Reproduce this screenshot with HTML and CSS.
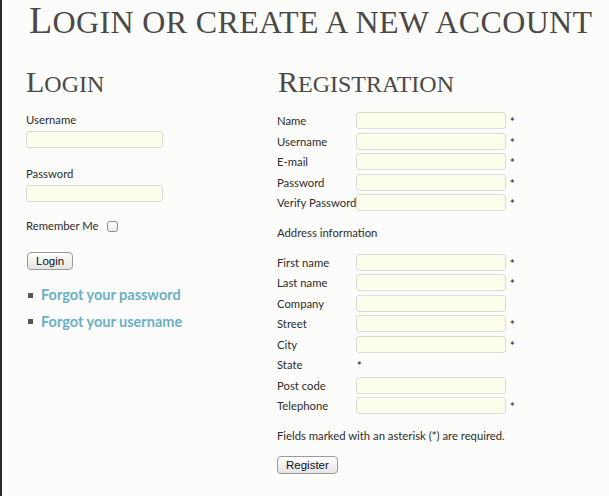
FILE: index.html
```html
<!DOCTYPE html>
<html lang="en">
<head>
  <meta charset="UTF-8">
  <meta name="viewport" content="width=device-width, initial-scale=1.0">
  <title>Login or create a new account</title>
  <link rel="stylesheet" href="styles.css">
</head>
<body>
  <div class="page">
    <h1 class="title">Login or create a new account</h1>

    <div class="columns">
      <div class="login">
        <h2>Login</h2>
        <form>
          <label class="field-label" for="login-user">Username</label>
          <input class="text" type="text" id="login-user">
          <label class="field-label" for="login-pass">Password</label>
          <input class="text" type="password" id="login-pass">
          <div class="remember">
            <label for="remember">Remember Me</label>
            <input class="check" type="checkbox" id="remember">
          </div>
          <button class="btn" type="button">Login</button>
        </form>
        <ul class="links">
          <li><a href="#">Forgot your password</a></li>
          <li><a href="#">Forgot your username</a></li>
        </ul>
      </div>

      <div class="register">
        <h2>Registration</h2>
        <form>
          <div class="rows">
            <div class="row"><label>Name</label><input class="text" type="text"><span class="req">*</span></div>
            <div class="row"><label>Username</label><input class="text" type="text"><span class="req">*</span></div>
            <div class="row"><label>E-mail</label><input class="text" type="text"><span class="req">*</span></div>
            <div class="row"><label>Password</label><input class="text" type="password"><span class="req">*</span></div>
            <div class="row"><label>Verify Password</label><input class="text" type="password"><span class="req">*</span></div>
          </div>

          <p class="group">Address information</p>

          <div class="rows">
            <div class="row"><label>First name</label><input class="text" type="text"><span class="req">*</span></div>
            <div class="row"><label>Last name</label><input class="text" type="text"><span class="req">*</span></div>
            <div class="row"><label>Company</label><input class="text" type="text"></div>
            <div class="row"><label>Street</label><input class="text" type="text"><span class="req">*</span></div>
            <div class="row"><label>City</label><input class="text" type="text"><span class="req">*</span></div>
            <div class="row"><label>State</label><span class="req state">*</span></div>
            <div class="row"><label>Post code</label><input class="text" type="text"></div>
            <div class="row"><label>Telephone</label><input class="text" type="text"><span class="req">*</span></div>
          </div>

          <p class="note">Fields marked with an asterisk (*) are required.</p>
          <button class="btn" type="button">Register</button>
        </form>
      </div>
    </div>
  </div>
</body>
</html>
```

FILE: styles.css
```css
body {
  margin: 0;
  min-height: 100vh;
  box-sizing: border-box;
  background: #fcfcfa;
  border-left: 2px solid #2b2b2b;
  font-family: Lato, "Liberation Sans", sans-serif;
  font-size: 11.3px;
  color: #2c2c2c;
}
.page {
  padding: 0 0 0 24px;
}
.title, h2 {
  font-family: "Liberation Serif", "Times New Roman", serif;
  font-weight: normal;
  text-transform: uppercase;
  color: #4a4947;
  margin: 0;
}
.title {
  font-size: 32px;
  line-height: 40px;
  letter-spacing: 0.35px;
  padding: 2px 0 0 3px;
}
.title::first-letter {
  font-size: 38px;
  line-height: 0;
}
h2 {
  font-size: 24px;
  line-height: 30px;
  margin: 27px 0 0;
}
h2::first-letter {
  font-size: 30px;
  line-height: 0;
}
.columns {
  display: flex;
}
.login {
  width: 251px;
}
.field-label {
  display: block;
  line-height: 14px;
  margin: 19px 0 4px;
}
.field-label:first-child {
  margin-top: 14px;
}
.text {
  display: block;
  box-sizing: border-box;
  width: 137px;
  height: 17px;
  margin: 0;
  padding: 1px 4px;
  background: #fdfdec;
  border: 1px solid #dcdcd6;
  border-radius: 3px;
  font: inherit;
}
.remember {
  display: flex;
  align-items: center;
  gap: 8px;
  margin-top: 17px;
  line-height: 14px;
}
.check {
  appearance: none;
  width: 11px;
  height: 11px;
  margin: 0;
  border: 1px solid #8d8d8d;
  border-radius: 3px;
  background: linear-gradient(#ffffff, #ececec);
}
.btn {
  display: block;
  height: 18px;
  padding: 0 8px;
  margin: 19px 0 0 1px;
  border: 1px solid #9a9a9a;
  border-radius: 4px;
  background: linear-gradient(#ffffff, #e4e4e4);
  font-family: "Liberation Sans", Arial, sans-serif;
  font-size: 11.5px;
  color: #111;
}
.links {
  list-style: none;
  margin: 16px 0 0;
  padding: 0;
}
.links li {
  display: flex;
  align-items: center;
  gap: 8px;
  line-height: 18px;
  margin-bottom: 8.7px;
}
.links li::before {
  content: "";
  width: 5px;
  height: 5px;
  margin-left: 2px;
  background: #555;
}
.links a {
  color: #6ab0c4;
  font-weight: bold;
  font-size: 14.5px;
  text-decoration: none;
}
.register {
  flex: 1;
}
.register h2 {
  margin-left: 1px;
}
.register h2 + form {
  margin-top: 13px;
}
.row {
  display: grid;
  grid-template-columns: 79px 150px auto;
  height: 20.5px;
}
.row label {
  line-height: 17px;
  white-space: nowrap;
}
.row .text {
  width: 150px;
}
.req {
  font-size: 11px;
  font-weight: bold;
  line-height: 17px;
  padding: 1px 0 0 4px;
  color: #444;
}
.req.state {
  padding-left: 1px;
}
.group {
  line-height: 14px;
  margin: 11px 0 0;
}
.rows + .group + .rows {
  margin-top: 14px;
}
.note {
  line-height: 14px;
  margin: 11px 0 0;
}
.register .btn {
  margin: 13px 0 0;
  padding: 0 8px;
}
```
